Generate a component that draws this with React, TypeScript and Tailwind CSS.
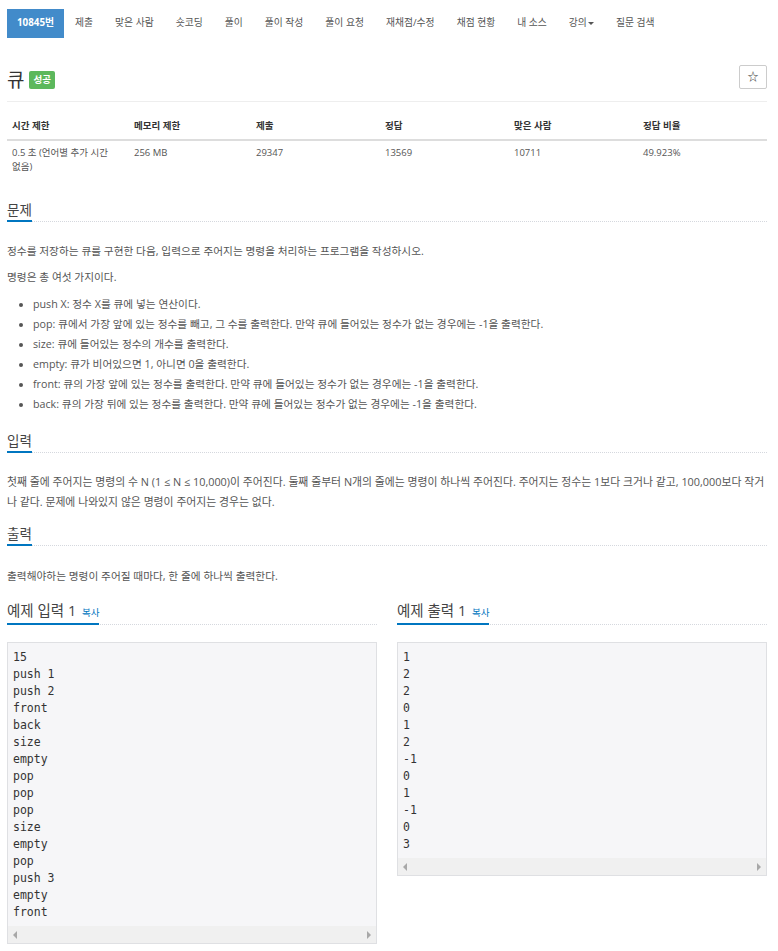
const font = "font-['Open_Sans','Noto_Sans_CJK_KR',sans-serif]";

const tabs = ["제출", "맞은 사람", "숏코딩", "풀이", "풀이 작성", "풀이 요청", "재채점/수정", "채점 현황", "내 소스"];

const stats = [
  { label: "시간 제한", value: "0.5 초 (언어별 추가 시간 없음)", w: "w-[122px]" },
  { label: "메모리 제한", value: "256 MB", w: "w-[122px]" },
  { label: "제출", value: "29347", w: "w-[129px]" },
  { label: "정답", value: "13569", w: "w-[129px]" },
  { label: "맞은 사람", value: "10711", w: "w-[129px]" },
  { label: "정답 비율", value: "49.923%", w: "w-[129px]" },
];

const commands = [
  "push X: 정수 X를 큐에 넣는 연산이다.",
  "pop: 큐에서 가장 앞에 있는 정수를 빼고, 그 수를 출력한다. 만약 큐에 들어있는 정수가 없는 경우에는 -1을 출력한다.",
  "size: 큐에 들어있는 정수의 개수를 출력한다.",
  "empty: 큐가 비어있으면 1, 아니면 0을 출력한다.",
  "front: 큐의 가장 앞에 있는 정수를 출력한다. 만약 큐에 들어있는 정수가 없는 경우에는 -1을 출력한다.",
  "back: 큐의 가장 뒤에 있는 정수를 출력한다. 만약 큐에 들어있는 정수가 없는 경우에는 -1을 출력한다.",
];

const sampleIn = "15\npush 1\npush 2\nfront\nback\nsize\nempty\npop\npop\npop\nsize\nempty\npop\npush 3\nempty\nfront";
const sampleOut = "1\n2\n2\n0\n1\n2\n-1\n0\n1\n-1\n0\n3";

function Headline({ title, className = "", size = "text-[13.5px]" }: { title: React.ReactNode; className?: string; size?: string }) {
  return (
    <div className={`border-b border-dotted border-[#d5d8de] ${className}`}>
      <span className={`inline-block -mb-px border-b-2 border-[#0076c0] leading-[20px] text-[#444] ${size}`}>
        {title}
      </span>
    </div>
  );
}

function SampleBox({ text }: { text: string }) {
  return (
    <div className="mt-[17px] border border-[#dfe0e3] bg-[#f6f6f8]">
      <pre className="px-[5px] pt-[6px] pb-[5px] font-['DejaVu_Sans_Mono',monospace] text-[11.5px] leading-[17px] text-[#333]">
        {text}
      </pre>
      <div className="flex h-[17px] items-center justify-between bg-[#f0f0f0] px-[5px]">
        <span className="h-0 w-0 border-y-[4px] border-r-[4px] border-y-transparent border-r-[#a8a8a8]" />
        <span className="h-0 w-0 border-y-[4px] border-l-[4px] border-y-transparent border-l-[#a8a8a8]" />
      </div>
    </div>
  );
}

function SampleTitle({ label }: { label: string }) {
  return (
    <>
      {label} <span className="ml-[2px] text-[9.5px] text-[#0076c0]">복사</span>
    </>
  );
}

export default function App() {
  return (
    <div className={`${font} min-h-[951px] bg-white text-[#555]`}>
      <div className="ml-[7px] w-[760px] pt-[9px]">
        {/* tabs */}
        <ul className="flex h-[29px] items-stretch text-[9.8px]">
          <li className="flex items-center bg-[#428bca] px-[10px] font-bold text-white">10845번</li>
          {tabs.map((t) => (
            <li key={t} className="flex items-center px-[11px] text-[#555]">{t}</li>
          ))}
          <li className="flex items-center px-[11px] text-[#555]">
            강의
            <span className="ml-[1px] h-0 w-0 border-x-[3px] border-t-[3px] border-x-transparent border-t-[#555]" />
          </li>
          <li className="flex items-center px-[11px] text-[#555]">질문 검색</li>
        </ul>

        {/* title */}
        <div className="mt-[27px] flex items-start justify-between border-b border-[#eee] pb-[6px]">
          <div className="flex h-[30px] items-center gap-[5px]">
            <span className="text-[19px] leading-none text-[#333]">큐</span>
            <span className="rounded-[2px] bg-[#5cb85c] px-[4px] py-[2px] text-[9.5px] font-bold leading-[14px] text-white">성공</span>
          </div>
          <button className="flex h-[24px] w-[28px] items-center justify-center rounded-[2px] border border-[#ccc] bg-white text-[11px] text-[#333]">
            ☆
          </button>
        </div>

        {/* stats */}
        <table className="mt-[11px] w-[760px] table-fixed border-collapse text-[9.5px]">
          <thead>
            <tr className="border-b-2 border-[#ddd]">
              {stats.map((s) => (
                <th key={s.label} className={`${s.w} px-[5px] py-[6px] text-left font-bold leading-[14px] text-[#333]`}>{s.label}</th>
              ))}
            </tr>
          </thead>
          <tbody>
            <tr>
              {stats.map((s) => (
                <td key={s.label} className="break-keep px-[5px] py-[5px] align-top leading-[14px] text-[#555]">{s.value}</td>
              ))}
            </tr>
          </tbody>
        </table>

        {/* 문제 */}
        <Headline title="문제" className="mt-[18px]" />
        <div className="mt-[19px] text-[10.7px] leading-[20px]">
          <p className="mb-[6px]">정수를 저장하는 큐를 구현한 다음, 입력으로 주어지는 명령을 처리하는 프로그램을 작성하시오.</p>
          <p>명령은 총 여섯 가지이다.</p>
          <ul className="mt-[7px] list-disc pl-[26px]">
            {commands.map((c) => (
              <li key={c}>{c}</li>
            ))}
          </ul>
        </div>

        {/* 입력 */}
        <Headline title="입력" className="mt-[14px]" />
        <p className="mt-[19px] text-[10.85px] leading-[20px]">
          첫째 줄에 주어지는 명령의 수 N (1 ≤ N ≤ 10,000)이 주어진다. 둘째 줄부터 N개의 줄에는 명령이 하나씩 주어진다. 주어지는 정수는 1보다 크거나 같고, 100,000보다 작거나 같다. 문제에 나와있지 않은 명령이 주어지는 경우는 없다.
        </p>

        {/* 출력 */}
        <Headline title="출력" className="mt-[9px]" />
        <p className="mt-[20px] text-[10.7px] leading-[20px]">출력해야하는 명령이 주어질 때마다, 한 줄에 하나씩 출력한다.</p>

        {/* 예제 */}
        <div className="mt-[12px] grid grid-cols-2 gap-[20px]">
          <div>
            <Headline size="text-[14.5px]" title={<SampleTitle label="예제 입력 1" />} />
            <SampleBox text={sampleIn} />
          </div>
          <div>
            <Headline size="text-[14.5px]" title={<SampleTitle label="예제 출력 1" />} />
            <SampleBox text={sampleOut} />
          </div>
        </div>
      </div>
    </div>
  );
}
